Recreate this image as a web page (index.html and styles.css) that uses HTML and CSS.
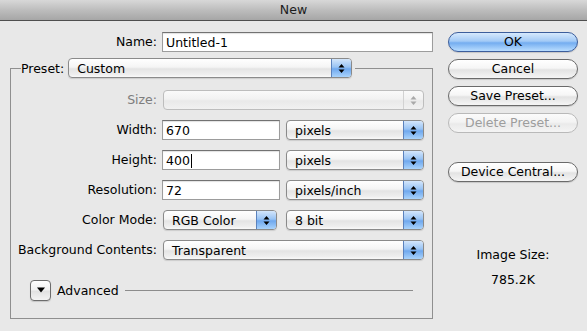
FILE: index.html
```html
<!DOCTYPE html>
<html lang="en">

<head>
    <meta charset="UTF-8">
    <title>New</title>
    <link rel="stylesheet" href="styles.css">
</head>

<body>
    <div class="titlebar">New</div>
    <div class="content">
        <div class="main">
            <div class="name-row">
                <label class="label name-label">Name:</label>
                <div class="field name-field">Untitled-1</div>
            </div>
            <fieldset class="group">
                <legend>
                    <div class="preset">
                        <span>Preset:</span>
                        <div class="popup preset-popup">
                            <span>Custom</span>
                            <span class="cap"><svg viewBox="0 0 7 11" width="7" height="11"><path d="M0.5 4.5 L3.5 1 L6.5 4.5 Z M0.5 6.5 L3.5 10 L6.5 6.5 Z"/></svg></span>
                        </div>
                    </div>
                </legend>

                <div class="row">
                    <label class="label disabled">Size:</label>
                    <div class="popup popup-wide is-disabled">
                        <span></span>
                        <span class="cap"><svg viewBox="0 0 7 11" width="7" height="11"><path d="M0.5 4.5 L3.5 1 L6.5 4.5 Z M0.5 6.5 L3.5 10 L6.5 6.5 Z"/></svg></span>
                    </div>
                </div>

                <div class="row">
                    <label class="label">Width:</label>
                    <div class="field num-field">670</div>
                    <div class="popup unit-popup">
                        <span>pixels</span>
                        <span class="cap"><svg viewBox="0 0 7 11" width="7" height="11"><path d="M0.5 4.5 L3.5 1 L6.5 4.5 Z M0.5 6.5 L3.5 10 L6.5 6.5 Z"/></svg></span>
                    </div>
                </div>

                <div class="row">
                    <label class="label">Height:</label>
                    <div class="field num-field">400<span class="caret"></span></div>
                    <div class="popup unit-popup">
                        <span>pixels</span>
                        <span class="cap"><svg viewBox="0 0 7 11" width="7" height="11"><path d="M0.5 4.5 L3.5 1 L6.5 4.5 Z M0.5 6.5 L3.5 10 L6.5 6.5 Z"/></svg></span>
                    </div>
                </div>

                <div class="row">
                    <label class="label">Resolution:</label>
                    <div class="field num-field">72</div>
                    <div class="popup unit-popup">
                        <span>pixels/inch</span>
                        <span class="cap"><svg viewBox="0 0 7 11" width="7" height="11"><path d="M0.5 4.5 L3.5 1 L6.5 4.5 Z M0.5 6.5 L3.5 10 L6.5 6.5 Z"/></svg></span>
                    </div>
                </div>

                <div class="row">
                    <label class="label">Color Mode:</label>
                    <div class="popup mode-popup">
                        <span>RGB Color</span>
                        <span class="cap"><svg viewBox="0 0 7 11" width="7" height="11"><path d="M0.5 4.5 L3.5 1 L6.5 4.5 Z M0.5 6.5 L3.5 10 L6.5 6.5 Z"/></svg></span>
                    </div>
                    <div class="popup unit-popup bits-popup">
                        <span>8 bit</span>
                        <span class="cap"><svg viewBox="0 0 7 11" width="7" height="11"><path d="M0.5 4.5 L3.5 1 L6.5 4.5 Z M0.5 6.5 L3.5 10 L6.5 6.5 Z"/></svg></span>
                    </div>
                </div>

                <div class="row">
                    <label class="label">Background Contents:</label>
                    <div class="popup popup-wide">
                        <span>Transparent</span>
                        <span class="cap"><svg viewBox="0 0 7 11" width="7" height="11"><path d="M0.5 4.5 L3.5 1 L6.5 4.5 Z M0.5 6.5 L3.5 10 L6.5 6.5 Z"/></svg></span>
                    </div>
                </div>

                <div class="advanced">
                    <span class="disclosure"><svg viewBox="0 0 8 6" width="8" height="6"><path d="M0 0.5 L8 0.5 L4 5.5 Z"/></svg></span>
                    <span>Advanced</span>
                    <span class="rule"></span>
                </div>
            </fieldset>
        </div>

        <div class="side">
            <div class="btn btn-default">OK</div>
            <div class="btn">Cancel</div>
            <div class="btn">Save Preset...</div>
            <div class="btn btn-disabled">Delete Preset...</div>
            <div class="btn btn-device">Device Central...</div>
            <div class="image-size">Image Size:</div>
            <div class="image-size-value">785.2K</div>
        </div>
    </div>
</body>

</html>
```

FILE: styles.css
```css
body {
    margin: 0;
    width: 587px;
    height: 331px;
    overflow: hidden;
    background-color: #e8e8e8;
    font-family: "DejaVu Sans", "Liberation Sans", sans-serif;
    font-size: 12.5px;
    color: #000;
}

/* ventana */
.titlebar {
    height: 20px;
    line-height: 20px;
    text-align: center;
    color: #1c1c1c;
    background: linear-gradient(#d8d8d8, #bdbdbd 50%, #a6a6a6);
    border-bottom: 1px solid #4f4f4f;
}

.content {
    display: flex;
    padding-top: 11px;
}

.main {
    width: 433px;
}

/* campos */
.label {
    flex: none;
    text-align: right;
    line-height: 20px;
}

.label.disabled {
    color: #7d7d7d;
}

.name-row {
    display: flex;
    gap: 5px;
    height: 20px;
}

.name-label {
    width: 157px;
}

.field {
    box-sizing: border-box;
    height: 20px;
    line-height: 19px;
    padding: 0 3px;
    background: #fff;
    border: 1px solid #9c9c9c;
    border-top-color: #727272;
    box-shadow: inset 0 1px 1px rgba(0, 0, 0, 0.12);
}

.name-field {
    width: 271px;
}

.num-field {
    width: 118px;
}

.caret {
    display: inline-block;
    width: 1px;
    height: 14px;
    margin-left: 1px;
    vertical-align: -3px;
    background: #000;
}

/* grupo */
.group {
    margin: 6px 0 0 10px;
    padding: 12px 0 18px 0;
    width: 421px;
    min-width: 0;
    border: 1px solid #8f8f8f;
}

.group legend {
    margin-left: 10px;
    padding: 0 3px 0 0;
}

.preset {
    display: flex;
    align-items: center;
    gap: 4px;
}

.row {
    display: flex;
    align-items: center;
    height: 20px;
    margin-bottom: 10px;
}

.row .label {
    width: 146px;
    margin-right: 5px;
}

/* menus */
.popup {
    box-sizing: border-box;
    display: flex;
    align-items: center;
    height: 20px;
    padding-left: 8px;
    border: 1px solid #8a8a8a;
    border-radius: 4px;
    background: linear-gradient(#ffffff, #f5f5f5 45%, #e4e4e4 55%, #eeeeee 85%, #f9f9f9);
    box-shadow: 0 1px 1px rgba(0, 0, 0, 0.12);
}

.popup .cap {
    display: flex;
    align-items: center;
    justify-content: center;
    margin-left: auto;
    width: 19px;
    height: 100%;
    border-left: 1px solid #5b82bd;
    border-radius: 0 3px 3px 0;
    background: linear-gradient(#d4e6fb, #98c3f4 45%, #6fa8ee 55%, #a9d3fc);
}

.popup .cap svg {
    fill: #000;
}

.popup.is-disabled {
    border-color: #bdbdbd;
    box-shadow: none;
    background: linear-gradient(#fafafa, #f2f2f2 45%, #e9e9e9 55%, #f1f1f1);
}

.popup.is-disabled .cap {
    background: none;
    border-left-color: #d2d2d2;
}

.popup.is-disabled .cap svg {
    fill: #a9a9a9;
}

.preset-popup {
    width: 284px;
}

.popup-wide {
    width: 261px;
    margin-left: 1px;
}

.unit-popup {
    width: 138px;
    margin-left: 6px;
}

.mode-popup {
    width: 114px;
    margin-left: 1px;
}

.bits-popup {
    margin-left: 9px;
}

/* avanzado */
.advanced {
    display: flex;
    align-items: center;
    gap: 6px;
    height: 20px;
    margin: 20px 19px 0 19px;
}

.disclosure {
    box-sizing: border-box;
    display: flex;
    align-items: center;
    justify-content: center;
    width: 21px;
    height: 21px;
    border: 1px solid #6c6c6c;
    border-radius: 4px;
    background: linear-gradient(#ffffff, #f2f2f2 45%, #e2e2e2 55%, #f3f3f3);
    box-shadow: 0 1px 1px rgba(0, 0, 0, 0.15);
}

.rule {
    flex: 1;
    height: 1px;
    background: #8c8c8c;
}

/* botones */
.side {
    display: flex;
    flex-direction: column;
    align-items: center;
    width: 130px;
    margin-left: 15px;
}

.btn {
    box-sizing: border-box;
    width: 130px;
    height: 20px;
    line-height: 18px;
    margin-bottom: 7px;
    text-align: center;
    border: 1px solid #6a6a6a;
    border-radius: 10px;
    background: linear-gradient(#ffffff, #f6f6f6 45%, #e3e3e3 55%, #f5f5f5);
    box-shadow: 0 1px 1px rgba(0, 0, 0, 0.15);
}

.btn-default {
    border-color: #3c5e9c;
    background: linear-gradient(#d6e9fd, #a3caf6 45%, #74adf0 55%, #b9ddff);
}

.btn-disabled {
    color: #9d9d9d;
    border-color: #b9b9b9;
    box-shadow: none;
    background: linear-gradient(#fbfbfb, #f3f3f3 45%, #eaeaea 55%, #f4f4f4);
}

.btn-device {
    margin-top: 22px;
}

.image-size {
    margin-top: 58px;
    line-height: 16px;
}

.image-size-value {
    margin-top: 9px;
    line-height: 16px;
}
```
